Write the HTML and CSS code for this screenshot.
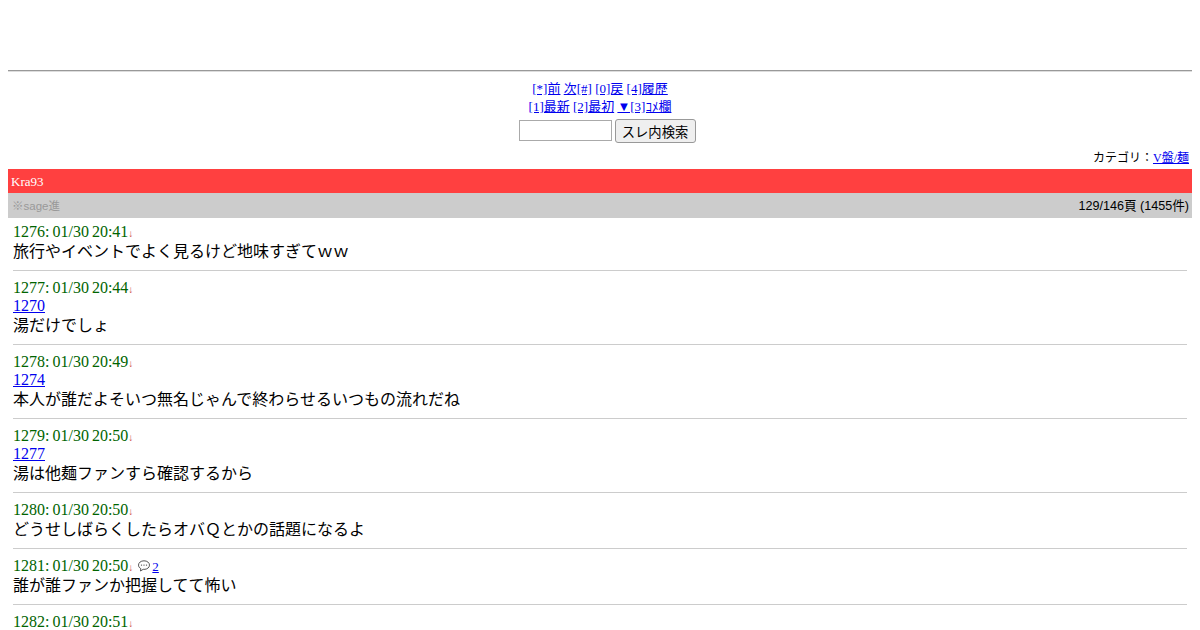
FILE: index.html
```html
<!DOCTYPE html>
<html lang="ja">
<head>
    <meta charset="UTF-8">
    <title>Kra93</title>
    <link rel="stylesheet" href="styles.css">
</head>
<body>
    <div class="ad-space"></div>
    <hr class="top-rule">

    <nav class="nav">
        <div><a href="#">[*]前</a> <a href="#">次[#]</a> <a href="#">[0]戻</a> <a href="#">[4]履歴</a></div>
        <div><a href="#">[1]最新</a> <a href="#">[2]最初</a> <a href="#">▼[3]ｺﾒ欄</a></div>
    </nav>

    <form class="search">
        <input type="text" class="search-box">
        <button type="button" class="search-btn">スレ内検索</button>
    </form>

    <div class="category">カテゴリ：<a href="#">V盤/麺</a></div>

    <h1 class="title">Kra93</h1>
    <div class="subbar">
        <span class="sage">※sage進</span>
        <span class="count">129/146頁 (1455件)</span>
    </div>

    <main class="posts">
        <article class="post">
            <div class="head">1276: 01/30 20:41<span class="arrow">↓</span></div>
            <div class="body">旅行やイベントでよく見るけど地味すぎてｗｗ</div>
        </article>
        <article class="post">
            <div class="head">1277: 01/30 20:44<span class="arrow">↓</span></div>
            <div class="anchor"><a href="#">1270</a></div>
            <div class="body">湯だけでしょ</div>
        </article>
        <article class="post">
            <div class="head">1278: 01/30 20:49<span class="arrow">↓</span></div>
            <div class="anchor"><a href="#">1274</a></div>
            <div class="body">本人が誰だよそいつ無名じゃんで終わらせるいつもの流れだね</div>
        </article>
        <article class="post">
            <div class="head">1279: 01/30 20:50<span class="arrow">↓</span></div>
            <div class="anchor"><a href="#">1277</a></div>
            <div class="body">湯は他麺ファンすら確認するから</div>
        </article>
        <article class="post">
            <div class="head">1280: 01/30 20:50<span class="arrow">↓</span></div>
            <div class="body">どうせしばらくしたらオバＱとかの話題になるよ</div>
        </article>
        <article class="post">
            <div class="head">1281: 01/30 20:50<span class="arrow">↓</span><svg class="bubble" viewBox="0 0 12 12" width="12" height="12">
                    <path d="M6 .8C2.800 .8 .5 2.700 .5 5.100c0 1.500.9 2.700 2.300 3.500L2.500 11l2.700-1.700c.3 0 .5.100.8.100 3.200 0 5.500-1.900 5.500-4.300S9.200 .8 6 .8z" fill="#fff" stroke="#444" stroke-width=".9"/>
                    <circle cx="3.500" cy="5.100" r=".7" fill="#444"/>
                    <circle cx="6" cy="5.100" r=".7" fill="#444"/>
                    <circle cx="8.500" cy="5.100" r=".7" fill="#444"/>
                </svg><a href="#" class="reply-count">2</a></div>
            <div class="body">誰が誰ファンか把握してて怖い</div>
        </article>
        <article class="post">
            <div class="head">1282: 01/30 20:51<span class="arrow">↓</span></div>
        </article>
    </main>
</body>
</html>
```

FILE: styles.css
```css
body {
    margin: 8px;
    font-family: "Liberation Serif", "Noto Sans CJK JP", serif;
    font-size: 16px;
    line-height: 19px;
    color: #000;
    background-color: #fff;
}

a {
    color: #0000ee;
}

.ad-space {
    height: 54px;
}

.top-rule {
    margin: 8px 0 0;
    border: none;
    border-top: 1px solid #999;
    border-bottom: 1px solid #ddd;
}

.nav {
    margin-top: 8px;
    text-align: center;
    font-size: 13px;
    line-height: 18px;
}

.search {
    display: flex;
    justify-content: center;
    align-items: flex-start;
    gap: 3px;
    margin-top: 3px;
    padding-left: 14px;
}

.search-box {
    box-sizing: border-box;
    width: 93px;
    height: 21px;
    margin-top: 1px;
    padding: 1px 2px;
    border: 1px solid #aaa;
}

.search-btn {
    box-sizing: border-box;
    width: 81px;
    height: 24px;
    padding: 0;
    font-family: "Liberation Sans", "Noto Sans CJK JP", sans-serif;
    font-size: 13.3px;
    color: #000;
    background-color: #efefef;
    border: 1px solid #999;
    border-radius: 3px;
}

.category {
    margin-top: 7px;
    padding-right: 3px;
    text-align: right;
    font-size: 12px;
    line-height: 16px;
}

.title {
    margin: 3px 0 0;
    padding: 0 3px;
    height: 24px;
    font-size: 13px;
    font-weight: normal;
    line-height: 26px;
    color: #fff;
    background-color: #ff4040;
}

.subbar {
    box-sizing: border-box;
    display: flex;
    justify-content: space-between;
    align-items: center;
    height: 25px;
    padding: 1px 3px 0 4px;
    background-color: #ccc;
    font-family: "Liberation Sans", "Noto Sans CJK JP", sans-serif;
    font-size: 12.6px;
}

.sage {
    font-size: 11.5px;
    color: #999;
}

.posts {
    padding: 0 5px;
}

.post {
    padding: 8px 0 9px;
    border-bottom: 1px solid #ccc;
}

.post:first-child {
    padding-top: 5px;
}

.post:last-child {
    border-bottom: none;
}

.head {
    line-height: 18px;
    word-spacing: -1px;
    color: #006400;
}

.anchor {
    line-height: 18px;
}

.body {
    padding-top: 2px;
    line-height: 18px;
}

.arrow {
    font-size: 10px;
    line-height: 0;
    color: #c44;
}

.bubble {
    vertical-align: -1px;
    margin-left: 5px;
    margin-right: 2px;
}

.reply-count {
    font-size: 13px;
    line-height: 0;
}
```
